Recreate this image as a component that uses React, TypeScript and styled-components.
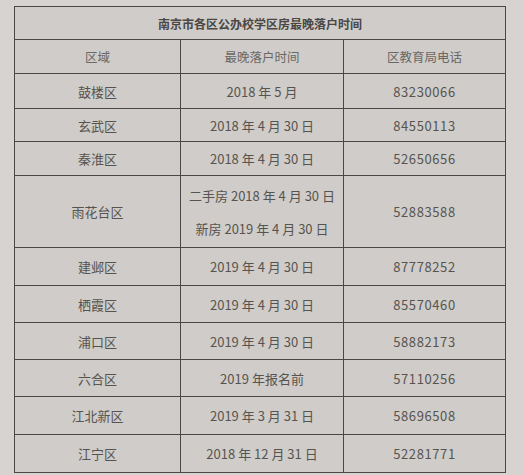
import styled, { createGlobalStyle } from 'styled-components';

const GlobalStyle = createGlobalStyle`
  html, body {
    margin: 0;
    background: #d6d3d0;
  }
  body {
    font-family: "Noto Sans CJK SC", "Noto Sans", sans-serif;
    color: #55524f;
  }
`;

const Page = styled.div`
  width: 523px;
  height: 475px;
  padding: 6px 17px 0 14px;
  box-sizing: border-box;
`;

const Sheet = styled.div`
  display: grid;
  grid-template-columns: 166px 163px 1fr;
  border: 1.5px solid #4a4846;
  background: #cfccc9;
`;

const Title = styled.div`
  grid-column: 1 / -1;
  height: 32px;
  display: flex;
  align-items: center;
  justify-content: center;
  font-size: 12px;
  font-weight: 700;
  color: #4a4744;
  border-bottom: 1.5px solid #4a4846;
`;

const Cell = styled.div<{ $h: number; $last?: boolean; $head?: boolean }>`
  height: ${(p) => p.$h}px;
  display: flex;
  flex-direction: column;
  align-items: center;
  justify-content: center;
  gap: 14px;
  font-size: ${(p) => (p.$head ? 12.5 : 13)}px;
  letter-spacing: ${(p) => (p.$last && !p.$head ? '0.6px' : '0')};
  color: ${(p) => (p.$head ? '#6a6764' : '#57544f')};
  border-right: ${(p) => (p.$last ? 'none' : '1.5px solid #4a4846')};
  border-bottom: 1.5px solid #4a4846;
  box-sizing: border-box;
  &:nth-last-child(-n + 3) {
    border-bottom: none;
  }
`;

type Row = { area: string; time: string[]; phone: string; h: number };

const rows: Row[] = [
  { area: '鼓楼区', time: ['2018 年 5 月'], phone: '83230066', h: 35 },
  { area: '玄武区', time: ['2018 年 4 月 30 日'], phone: '84550113', h: 33 },
  { area: '秦淮区', time: ['2018 年 4 月 30 日'], phone: '52650656', h: 34 },
  { area: '雨花台区', time: ['二手房 2018 年 4 月 30 日', '新房 2019 年 4 月 30 日'], phone: '52883588', h: 72 },
  { area: '建邺区', time: ['2019 年 4 月 30 日'], phone: '87778252', h: 38 },
  { area: '栖霞区', time: ['2019 年 4 月 30 日'], phone: '85570460', h: 37 },
  { area: '浦口区', time: ['2019 年 4 月 30 日'], phone: '58882173', h: 37 },
  { area: '六合区', time: ['2019 年报名前'], phone: '57110256', h: 37 },
  { area: '江北新区', time: ['2019 年 3 月 31 日'], phone: '58696508', h: 38 },
  { area: '江宁区', time: ['2018 年 12 月 31 日'], phone: '52281771', h: 37 },
];

export default function App() {
  return (
    <Page>
      <GlobalStyle />
      <Sheet>
        <Title>南京市各区公办校学区房最晚落户时间</Title>
        <Cell $h={34} $head>区域</Cell>
        <Cell $h={34} $head>最晚落户时间</Cell>
        <Cell $h={34} $head $last>区教育局电话</Cell>
        {rows.map((r) => [
          <Cell key={r.area + 'a'} $h={r.h}>{r.area}</Cell>,
          <Cell key={r.area + 't'} $h={r.h}>
            {r.time.map((t) => (
              <span key={t}>{t}</span>
            ))}
          </Cell>,
          <Cell key={r.area + 'p'} $h={r.h} $last>{r.phone}</Cell>,
        ])}
      </Sheet>
    </Page>
  );
}
